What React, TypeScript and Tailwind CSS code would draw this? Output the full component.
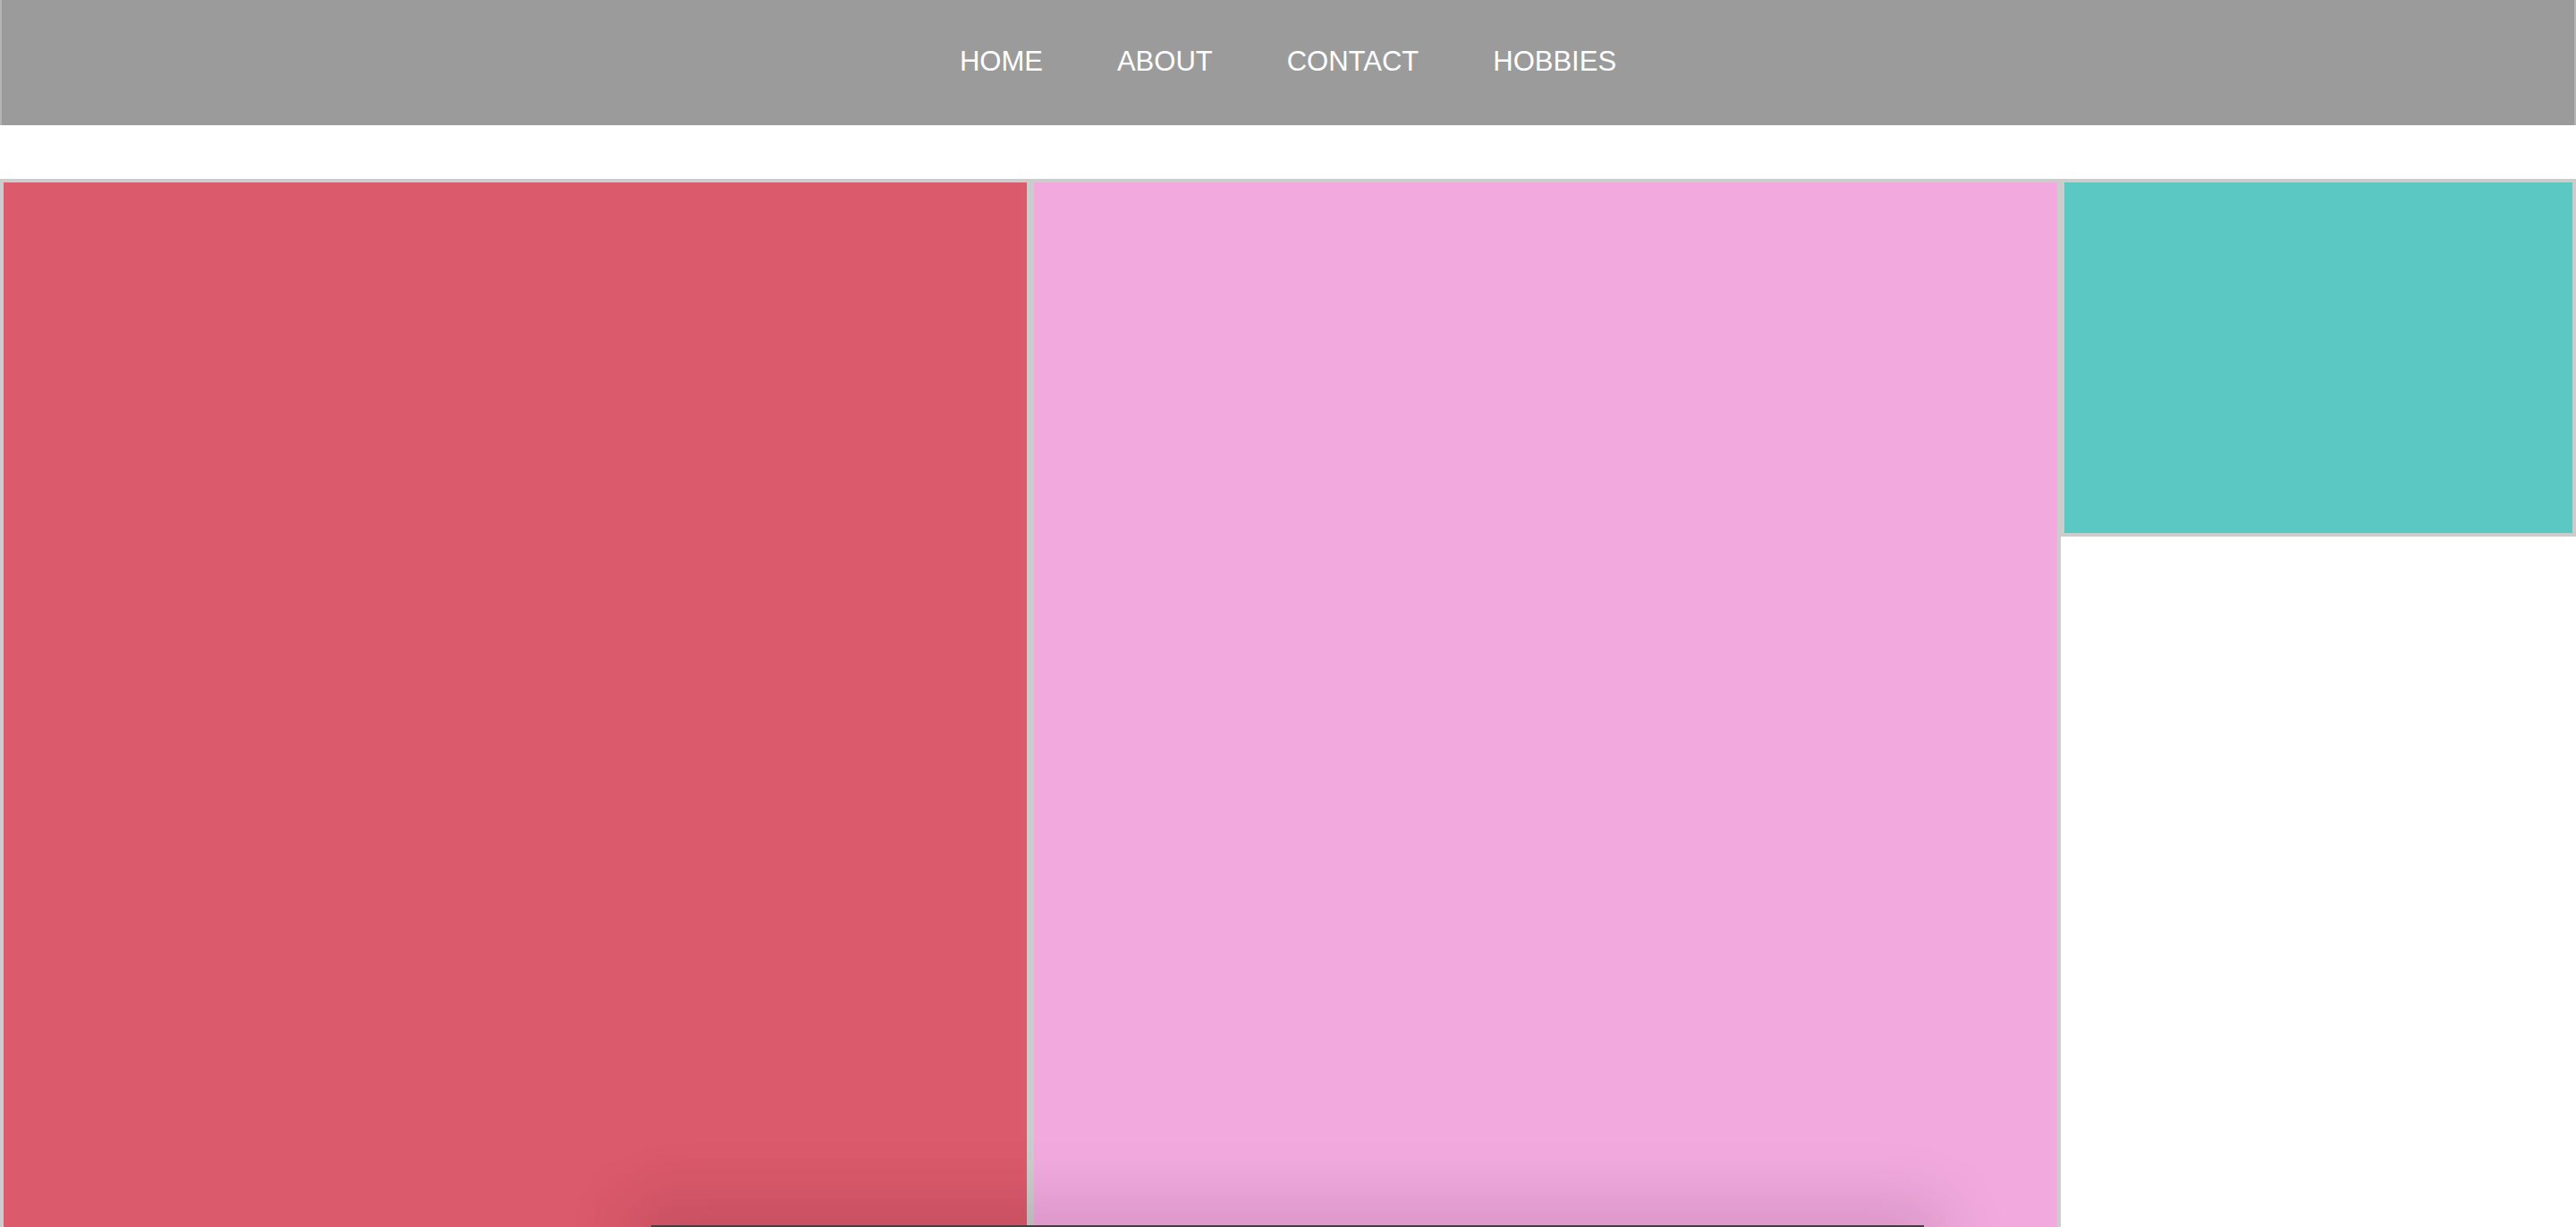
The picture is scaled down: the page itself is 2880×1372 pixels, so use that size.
import React from "react";

export default function App() {
  const items = ["HOME", "ABOUT", "CONTACT", "HOBBIES"];
  return (
    <div
      className="relative h-[1372px] w-full overflow-hidden bg-white"
      style={{ fontFamily: '"Liberation Sans", Arial, sans-serif' }}
    >
      <nav className="flex h-[140px] w-full items-center justify-center border-x-2 border-[#b4b4b4] bg-[#9b9b9b]">
        <ul className="flex gap-[83px] pb-[4px]">
          {items.map((t) => (
            <li key={t} className="text-[31px] leading-none text-white">
              {t}
            </li>
          ))}
        </ul>
      </nav>
      <div className="mt-[60px] flex items-start">
        <div className="h-[1300px] w-[40%] border-4 border-[#cccccc] bg-[#db5a6b]" />
        <div className="h-[1300px] w-[40%] border-4 border-[#cccccc] bg-[#f2aade]" />
        <div className="h-[400px] w-[20%] border-4 border-[#cccccc] bg-[#5cc8c4]" />
      </div>
      <div className="absolute bottom-[-24px] left-[728px] h-[24px] w-[1423px] rounded-full shadow-[0_0_70px_30px_rgba(40,0,30,0.13)]" />
      <div className="absolute bottom-0 left-[728px] h-[2px] w-[1423px] bg-[#4a3a42]" />
    </div>
  );
}
